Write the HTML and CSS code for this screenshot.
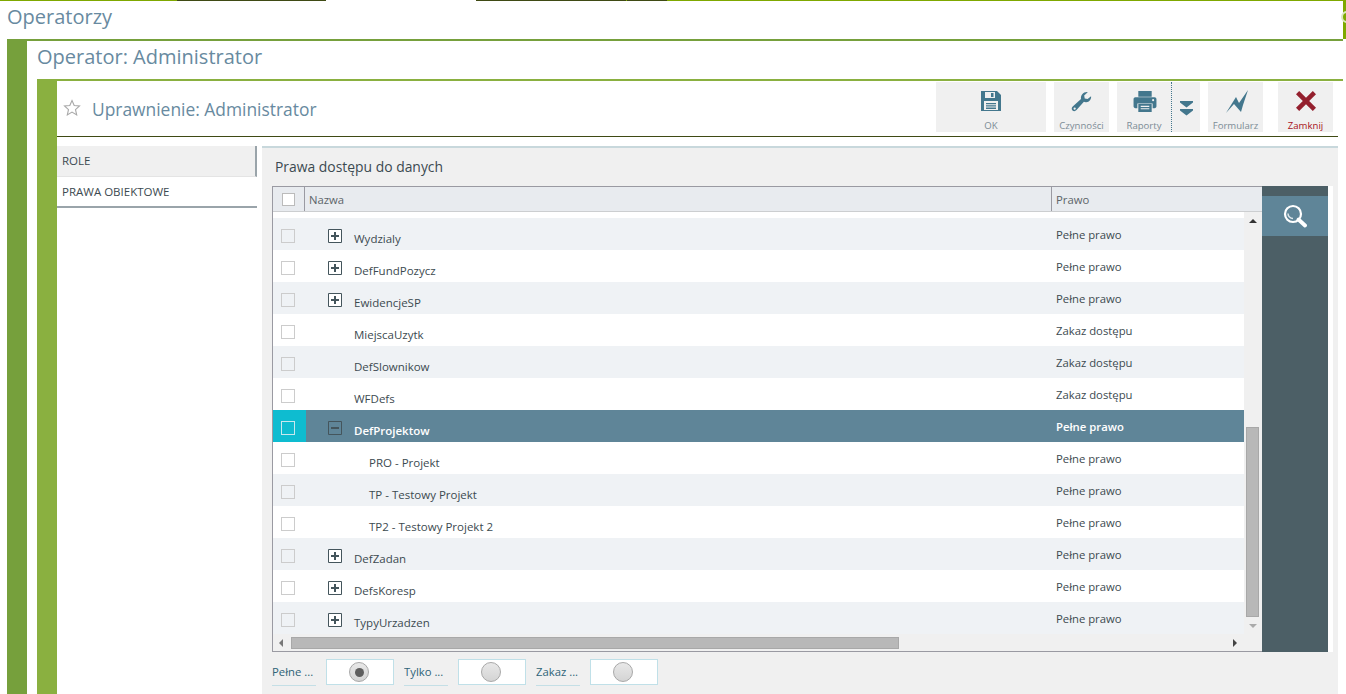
FILE: index.html
```html
<!DOCTYPE html>
<html lang="pl">
<head>
<meta charset="utf-8">
<title>Operatorzy</title>
<link rel="stylesheet" href="styles.css">
</head>
<body>
<div class="strip"><i class="s1"></i><i class="s2"></i><i class="s3"></i><i class="s4"></i><i class="s6"></i><i class="s7"></i><i class="s5"></i></div>
<header class="top"><h1 class="t1">Operatorzy</h1><span class="ring"></span></header>
<div class="outer">
  <div class="bar1"></div>
  <div class="outer-main">
    <h2 class="t2">Operator: Administrator</h2>
    <div class="inner">
      <div class="bar2"></div>
      <div class="inner-main">
        <div class="head">
          <svg class="star" viewBox="0 0 18 18" width="18" height="18"><path d="M9 1.500l2.200 5 5.300.5-4 3.600 1.200 5.300L9 13.100l-4.700 2.800 1.200-5.300-4-3.600 5.300-.5z" fill="none" stroke="#a8a8a8" stroke-width="1.100"/></svg>
          <h3 class="t3">Uprawnienie: Administrator</h3>
          <div class="tools">
            <div class="tool w110"><svg viewBox="0 0 20 20" width="20" height="20"><path fill="#43778d" fill-rule="evenodd" d="M0 0h16l4 4v16H0zM4 1v6h10V1zM10 2h2.500v4H10zM3 10v9h14v-9zM5 12h10v1.300H5zM5 14.300h10v1.300H5zM5 16.600h10v1.300H5z"/></svg><span>OK</span></div>
            <div class="tool w55 ml8"><svg viewBox="0 0 22 22" width="21" height="21"><path fill="#43778d" fill-rule="evenodd" d="M21 5.500c.6 3-2 6.500-5.500 6.200-.8 0-1.400-.2-2-.4L5.800 20c-1.300 1.400-3 1.500-4.200.4C.4 19.200.5 17.400 1.800 16.200L10.500 8.500C9.800 4.500 13 .7 17.500 1.200l-3.700 3.600.6 3 3 .7zM3.800 17.300a1.200 1.200 0 1 0 .1 2.400 1.200 1.200 0 0 0-.1-2.400z"/></svg><span>Czynności</span></div>
            <div class="tool w54 ml8"><svg class="printer" viewBox="0 0 24 22" width="24" height="21"><path fill="#43778d" fill-rule="evenodd" d="M5 0h14v6H5zM2 6.500h20c1.200 0 2 .9 2 2v7.500c0 1.100-.8 2-2 2h-2v-5H4v5H2c-1.200 0-2-.9-2-2V8.500c0-1.100.8-2 2-2zM20.500 8.500a1.100 1.100 0 1 0 0 2.200 1.100 1.100 0 0 0 0-2.200zM5 13.500h14V22H5zM7.500 15.500v1.200h9v-1.200zM7.500 18v1.200h9V18z"/></svg><span>Raporty</span></div>
            <div class="tool more"><svg viewBox="0 0 13 15" width="13" height="15"><path fill="#43778d" d="M0 0h13v1.500L6.500 6.500 0 1.500zM0 8h13v1.500L6.500 14.500 0 9.500z"/></svg></div>
            <div class="tool w55 ml8"><svg class="bolt" viewBox="0 0 24 23" width="24" height="23"><path fill="#43778d" d="M1 23L11 7 14 13 23 0 18 15 16 22 9 14z"/></svg><span>Formularz</span></div>
            <div class="tool w55 ml15"><svg viewBox="0 0 22 22" width="20" height="20"><path fill="#94202e" d="M3.500 0L11 7.500 18.500 0 22 3.500 14.500 11 22 18.500 18.500 22 11 14.500 3.500 22 0 18.500 7.500 11 0 3.500z"/></svg><span class="red">Zamknij</span></div>
          </div>
        </div>
        <div class="content">
          <nav class="tabs">
            <div class="tab tab-role">ROLE</div>
            <div class="tab tab-obj">PRAWA OBIEKTOWE</div>
          </nav>
          <section class="panel">
            <div class="ptitle">Prawa dostępu do danych</div>
            <div class="gridbox">
              <div class="grid">
                <div class="ghead">
                  <div class="hc1"><span class="cb hcb"></span></div>
                  <div class="hc2">Nazwa</div>
                  <div class="hc3">Prawo</div>
                </div>
                <div class="gbody">
                  <div class="rows">
                    <div class="row alt"><span class="cc"><span class="cb"></span></span><span class="name"><span class="tg"><svg viewBox="0 0 14 14" width="14" height="14"><path d="M.5.500h13v13H.5z" fill="#fff" stroke="#44555c"/><path d="M3 7h8M7 3v8" stroke="#44555c" stroke-width="2"/></svg></span>Wydzialy</span><span class="val">Pełne prawo</span></div>
                    <div class="row"><span class="cc"><span class="cb"></span></span><span class="name"><span class="tg"><svg viewBox="0 0 14 14" width="14" height="14"><path d="M.5.500h13v13H.5z" fill="#fff" stroke="#44555c"/><path d="M3 7h8M7 3v8" stroke="#44555c" stroke-width="2"/></svg></span>DefFundPozycz</span><span class="val">Pełne prawo</span></div>
                    <div class="row alt"><span class="cc"><span class="cb"></span></span><span class="name"><span class="tg"><svg viewBox="0 0 14 14" width="14" height="14"><path d="M.5.500h13v13H.5z" fill="#fff" stroke="#44555c"/><path d="M3 7h8M7 3v8" stroke="#44555c" stroke-width="2"/></svg></span>EwidencjeSP</span><span class="val">Pełne prawo</span></div>
                    <div class="row"><span class="cc"><span class="cb"></span></span><span class="name"><span class="tg"></span>MiejscaUzytk</span><span class="val">Zakaz dostępu</span></div>
                    <div class="row alt"><span class="cc"><span class="cb"></span></span><span class="name"><span class="tg"></span>DefSlownikow</span><span class="val">Zakaz dostępu</span></div>
                    <div class="row"><span class="cc"><span class="cb"></span></span><span class="name"><span class="tg"></span>WFDefs</span><span class="val">Zakaz dostępu</span></div>
                    <div class="row sel"><span class="cc"><span class="cb"></span></span><span class="name"><span class="tg"><svg viewBox="0 0 14 14" width="14" height="14"><path d="M.5.500h13v13H.5z" fill="none" stroke="#44555c"/><path d="M3 7h8" stroke="#44555c" stroke-width="2"/></svg></span>DefProjektow</span><span class="val">Pełne prawo</span></div>
                    <div class="row"><span class="cc"><span class="cb"></span></span><span class="name sub">PRO - Projekt</span><span class="val">Pełne prawo</span></div>
                    <div class="row alt"><span class="cc"><span class="cb"></span></span><span class="name sub">TP - Testowy Projekt</span><span class="val">Pełne prawo</span></div>
                    <div class="row"><span class="cc"><span class="cb"></span></span><span class="name sub">TP2 - Testowy Projekt 2</span><span class="val">Pełne prawo</span></div>
                    <div class="row alt"><span class="cc"><span class="cb"></span></span><span class="name"><span class="tg"><svg viewBox="0 0 14 14" width="14" height="14"><path d="M.5.500h13v13H.5z" fill="#fff" stroke="#44555c"/><path d="M3 7h8M7 3v8" stroke="#44555c" stroke-width="2"/></svg></span>DefZadan</span><span class="val">Pełne prawo</span></div>
                    <div class="row"><span class="cc"><span class="cb"></span></span><span class="name"><span class="tg"><svg viewBox="0 0 14 14" width="14" height="14"><path d="M.5.500h13v13H.5z" fill="#fff" stroke="#44555c"/><path d="M3 7h8M7 3v8" stroke="#44555c" stroke-width="2"/></svg></span>DefsKoresp</span><span class="val">Pełne prawo</span></div>
                    <div class="row alt"><span class="cc"><span class="cb"></span></span><span class="name"><span class="tg"><svg viewBox="0 0 14 14" width="14" height="14"><path d="M.5.500h13v13H.5z" fill="#fff" stroke="#44555c"/><path d="M3 7h8M7 3v8" stroke="#44555c" stroke-width="2"/></svg></span>TypyUrzadzen</span><span class="val">Pełne prawo</span></div>
                    <div class="hscroll"><i class="al"></i><b class="hthumb"></b><i class="ar"></i></div>
                  </div>
                  <div class="vscroll"><i class="au"></i><b class="vthumb"></b><i class="ad"></i></div>
                </div>
              </div>
              <aside class="side">
                <div class="search"><svg viewBox="0 0 24 24" width="24" height="24"><circle cx="10" cy="10" r="8" fill="none" stroke="#fff" stroke-width="2.200"/><path d="M5 9.500a5 5 0 0 0 5 5" fill="none" stroke="#dfe8ec" stroke-width="1.500"/><path d="M15.500 15.500l6.500 6" stroke="#fff" stroke-width="3.800" stroke-linecap="round"/></svg></div>
              </aside>
            </div>
            <div class="radios">
              <span class="rl">Pełne ...</span><span class="rb"><span class="rd on"></span></span>
              <span class="rl">Tylko ...</span><span class="rb"><span class="rd"></span></span>
              <span class="rl">Zakaz ...</span><span class="rb"><span class="rd"></span></span>
            </div>
          </section>
        </div>
      </div>
    </div>
  </div>
</div>
</body>
</html>
```
FILE: styles.css
```css
* { box-sizing: border-box; }
html, body { margin: 0; padding: 0; height: 694px; overflow: hidden; background: #fff; }
body { font-family: "Open Sans", "Noto Sans", sans-serif; color: #3c4a50; width: 1346px; }
h1, h2, h3 { margin: 0; font-weight: 400; color: #688aa0; }

.strip { display: flex; height: 1px; }
.strip i { display: block; height: 1px; }
.s1 { width: 177px; background: #7fa800; }
.s2 { width: 149px; background: #3f4a14; }
.s3 { width: 150px; background: #fff; }
.s4 { width: 150px; background: #3f4a14; }
.s6 { width: 1px; background: #7fa800; }
.s7 { width: 40px; background: #3f4a14; }
.s5 { flex: 1; background: #7fa800; }

.top { height: 38px; width: 1346px; padding: 0 0 8px 7px; display: flex; align-items: center; border-right: 3px solid #7fa800; position: relative; }
.t1 { font-size: 20px; }
.ring { position: absolute; right: -10px; top: 10px; width: 12px; height: 12px; border-radius: 50%; border: 2px solid #dce8c0; }

.outer { display: flex; margin-left: 7px; width: 1336px; height: 655px; border-top: 2px solid #76a03c; }
.bar1 { width: 20px; background: #76a03c; margin-top: -2px; }
.outer-main { flex: 1; padding-left: 10px; min-width: 0; }
.t2 { font-size: 20px; height: 38px; line-height: 32px; }
.inner { display: flex; height: 615px; border-top: 2px solid #8ab040; }
.bar2 { width: 20px; background: #8ab040; margin-top: -2px; }
.inner-main { flex: 1; min-width: 0; }

.head { display: flex; align-items: center; height: 56px; width: 1281px; border-bottom: 1px solid #3f4a14; }
.star { margin-left: 6px; margin-right: 11px; margin-top: -1px; }
.t3 { font-size: 17.400px; flex: 1; }
.tools { display: flex; height: 50px; margin-top: -3px; margin-right: 5px; }
.tool { background: #f0f0f0; height: 50px; display: flex; flex-direction: column; align-items: center; padding-top: 9px; font-size: 9.600px; color: #7c8c96; }
.tool svg { flex: none; }
.tool span { margin-top: auto; line-height: 12px; white-space: nowrap; }
.tool .bolt { margin: -1px 0 0 2px; }
.tool .printer { margin-left: 2px; }
.w110 { width: 110px; }
.w55 { width: 55px; }
.w54 { width: 54px; }
.ml8 { margin-left: 8px; }
.ml15 { margin-left: 15px; }
.tool.more { width: 29px; border-left: 1px dotted #43778d; padding-top: 19px; }
.red { color: #a81020; }

.content { display: flex; margin-top: 9px; width: 1281px; }
.tabs { width: 200px; }
.tab { font-size: 11.500px; padding-left: 5px; color: #3c4a50; }
.tab-role { height: 31px; line-height: 30px; background: #f0f0f0; border-right: 2px solid #9aa4aa; border-bottom: 1px solid #e4e4e4; }
.tab-obj { height: 31px; line-height: 30px; background: #fff; border-bottom: 2px solid #9aa4aa; }

.panel { margin-left: 5px; width: 1076px; height: 548px; background: #f0f0f0; border-top: 2px solid #c8d8dc; padding: 0 5px 0 10px; }
.ptitle { font-size: 13.900px; height: 38px; line-height: 38px; padding-left: 3px; color: #3c4a50; }
.gridbox { display: flex; height: 466px; background: #fff; }
.grid { width: 990px; border: 1px solid #9a9aa2; border-right: 0; display: flex; flex-direction: column; }
.ghead { display: flex; height: 25px; background: #e8ebef; border-bottom: 1px solid #ccced0; font-size: 11.300px; line-height: 25px; color: #5c6468; flex: none; }
.hc1 { width: 32px; border-right: 1px solid #9a9aa2; display: flex; align-items: center; justify-content: center; }
.hc2 { width: 747px; border-right: 1px solid #9a9aa2; padding-left: 4px; }
.hc3 { padding-left: 4px; }
.cb { display: block; width: 14px; height: 14px; border: 1px solid #ccc; background: #fff; }
.hcb { width: 13px; height: 13px; border-color: #bbb; }
.gbody { flex: 1; display: flex; min-height: 0; padding-top: 6px; }
.rows { width: 971px; display: flex; flex-direction: column; }
.row { display: flex; height: 32px; flex: none; font-size: 11.500px; align-items: center; }
.alt { background: #eff2f5; }
.alt .cb { background: transparent; }
.cc { width: 33px; height: 32px; flex: none; display: flex; align-items: center; padding-left: 8px; padding-top: 4px; }
.name { width: 749px; flex: none; display: flex; align-items: center; padding-top: 9px; padding-left: 22px; }
.tg { width: 26px; flex: none; height: 14px; margin-top: -5px; }
.tg svg { display: block; }
.name.sub { padding-left: 63px; }
.val { padding-left: 1px; font-size: 11.300px; }
.sel { background: #5f8598; color: #fff; font-weight: 600; }
.sel .cc { background: #0ebcd0; }
.sel .cb { background: transparent; border-color: #c8e8ee; }
.hscroll { height: 17px; flex: none; background: #f0f0f0; position: relative; display: flex; align-items: center; }
.hthumb { display: block; width: 608px; height: 12px; margin-left: 18px; background: #b8b8b8; border: 1px solid #a8a8a8; }
.al { width: 0; height: 0; border: 4px solid transparent; border-right-color: #777; border-left-width: 0; position: absolute; left: 6px; top: 5px; }
.ar { width: 0; height: 0; border: 4px solid transparent; border-left-color: #444; border-right-width: 0; position: absolute; right: 7px; top: 5px; }
.vscroll { width: 18px; background: #f0f0f0; margin-top: -6px; padding-top: 215px; position: relative; }
.vthumb { display: block; width: 13px; height: 190px; margin: 0 auto 0 2px; background: #b8b8b8; border: 1px solid #a8a8a8; }
.au { position: absolute; left: 5px; top: 7px; width: 0; height: 0; border: 4px solid transparent; border-bottom-color: #333; border-top-width: 0; }
.ad { position: absolute; left: 5px; bottom: 23px; width: 0; height: 0; border: 4px solid transparent; border-top-color: #aaa; border-bottom-width: 0; }
.side { width: 66px; background: #4c5f66; padding-top: 10px; }
.search { height: 40px; background: #5f8598; display: flex; align-items: center; justify-content: center; }

.radios { display: flex; margin-top: 7px; height: 27px; }
.rl { width: 44px; height: 27px; border-bottom: 1px solid #c4dfe6; font-size: 11.300px; line-height: 25px; color: #2f6478; margin-right: 10px; white-space: nowrap; overflow: hidden; }
.rb { width: 68px; height: 26px; background: #fff; border: 1px solid #c0e0e8; margin-right: 10px; padding-right: 2px; display: flex; align-items: center; justify-content: center; }
.rd { width: 20px; height: 20px; border-radius: 50%; border: 1px solid #a8a8a8; background: linear-gradient(#e8e8e8, #d4d4d4); display: flex; align-items: center; justify-content: center; }
.rd.on::after { content: ""; width: 9px; height: 9px; border-radius: 50%; background: #5e5e5e; }
```
